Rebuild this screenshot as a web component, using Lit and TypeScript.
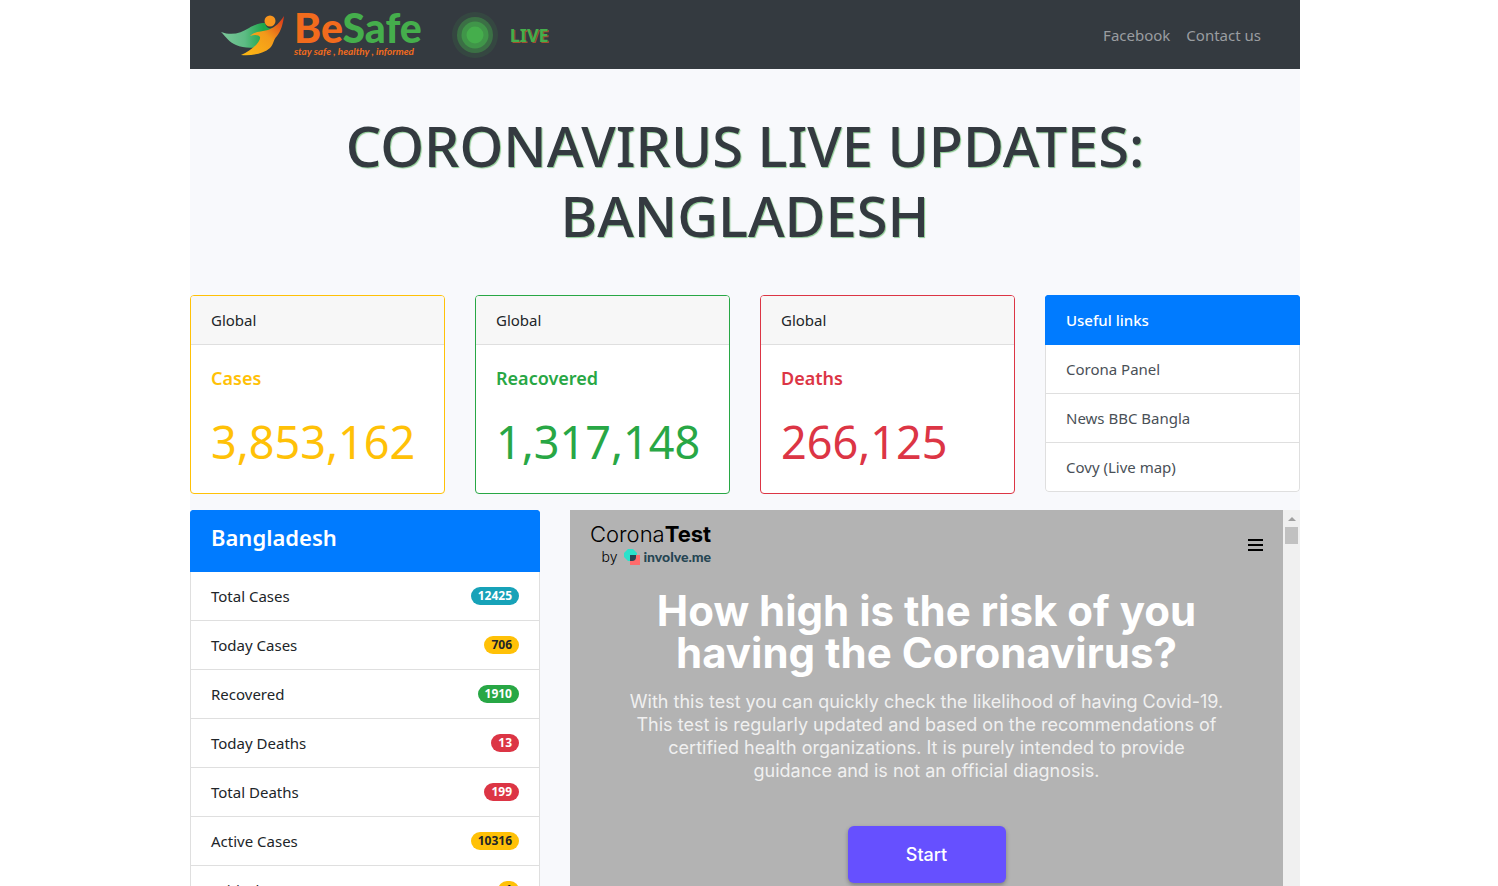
import { LitElement, html, css } from "lit";
import { customElement } from "lit/decorators.js";
import { classMap } from "lit/directives/class-map.js";

const totals = [
  { label: "Cases", value: "3,853,162", tone: "warning" },
  { label: "Reacovered", value: "1,317,148", tone: "success" },
  { label: "Deaths", value: "266,125", tone: "danger" },
];

const links = ["Corona Panel", "News BBC Bangla", "Covy (Live map)"];

const country = [
  { label: "Total Cases", value: "12425", tone: "info" },
  { label: "Today Cases", value: "706", tone: "warning" },
  { label: "Recovered", value: "1910", tone: "success" },
  { label: "Today Deaths", value: "13", tone: "danger" },
  { label: "Total Deaths", value: "199", tone: "danger" },
  { label: "Active Cases", value: "10316", tone: "warning" },
  { label: "Critical", value: "1", tone: "warning" },
];

@customElement("corona-test")
export class CoronaTest extends LitElement {
  static styles = css`
    :host {
      display: flex;
      background: #b3b3b3;
      font-family: Inter, "Liberation Sans", sans-serif;
      color: #fff;
    }
    .page {
      flex: 1;
      padding: 12px 20px;
    }
    .top {
      display: flex;
      justify-content: space-between;
      align-items: center;
      color: #000;
    }
    .brand {
      display: flex;
      flex-direction: column;
      align-items: flex-end;
    }
    .name {
      font-size: 22px;
      line-height: 25px;
      font-weight: 300;
    }
    .name b {
      font-weight: 700;
    }
    .by {
      display: flex;
      align-items: center;
      gap: 7px;
      font-size: 14px;
      line-height: 20px;
      font-weight: 300;
    }
    .maker {
      display: flex;
      align-items: center;
      gap: 2px;
      font: 900 14px/20px Lato, sans-serif;
      color: #264653;
    }
    .menu {
      border: 0;
      padding: 0;
      background: none;
      display: flex;
    }
    .intro {
      text-align: center;
      padding-top: 23px;
      margin: 0 auto;
      max-width: 598px;
    }
    h2 {
      margin: 0;
      font-size: 42px;
      line-height: 42px;
      font-weight: 700;
    }
    p {
      margin: 16px 0 44px;
      font-size: 18px;
      line-height: 23px;
      color: #f0f0f0;
    }
    .start {
      border: 0;
      border-radius: 6px;
      width: 158px;
      height: 57px;
      background: #6650ff;
      color: #fff;
      font: 500 18px/23px Inter, sans-serif;
      box-shadow: 0 2px 4px rgba(0, 0, 0, 0.3);
    }
    .track {
      width: 17px;
      background: #f0f0f0;
      display: flex;
      flex-direction: column;
      align-items: center;
    }
    .thumb {
      width: 13px;
      height: 17px;
      background: #c1c1c1;
    }
  `;

  render() {
    return html`
      <div class="page">
        <div class="top">
          <div class="brand">
            <div class="name">Corona<b>Test</b></div>
            <div class="by">
              by
              <span class="maker">
                <svg width="17" height="17" viewBox="0 0 17 17" aria-hidden="true">
                  <path d="M4 0h5l4 4v4l-4 4H4L0 8V4z" fill="#2ae2cb" />
                  <path d="M6 6h10v10H6z" fill="#ff6b6b" />
                  <path d="M6 6h6v2a4 4 0 0 1-4 4H6z" fill="#264653" />
                </svg>
                involve.me
              </span>
            </div>
          </div>
          <button class="menu" aria-label="Menu">
            <svg width="15" height="12" viewBox="0 0 15 12" aria-hidden="true">
              <path d="M0 0h15v2H0zM0 5h15v2H0zM0 10h15v2H0z" />
            </svg>
          </button>
        </div>
        <div class="intro">
          <h2>How high is the risk of you having the Coronavirus?</h2>
          <p>
            With this test you can quickly check the likelihood of having Covid-19. This test is
            regularly updated and based on the recommendations of certified health organizations.
            It is purely intended to provide guidance and is not an official diagnosis.
          </p>
          <button class="start">Start</button>
        </div>
      </div>
      <div class="track" aria-hidden="true">
        <svg width="17" height="17" viewBox="0 0 17 17"><path d="M5 11h8L9 7z" fill="#a0a0a0" /></svg>
        <div class="thumb"></div>
      </div>
    `;
  }
}

@customElement("app-root")
export class AppRoot extends LitElement {
  static styles = css`
    :host {
      display: block;
      max-height: 100vh;
      overflow: hidden;
      padding-right: 8px;
      background: #fff;
      color: #212529;
      font: 15px/24px "Noto Sans", "Open Sans", sans-serif;
    }
    * {
      box-sizing: border-box;
    }
    .container {
      max-width: 1110px;
      margin: 0 auto;
      background: #f8f9fc;
    }
    nav {
      display: flex;
      align-items: center;
      height: 69px;
      padding: 0 39px 0 30px;
      background: #343a40;
    }
    .logo {
      display: flex;
      gap: 8px;
      align-items: center;
      text-decoration: none;
      color: #f26b1d;
    }
    .word {
      display: flex;
      flex-direction: column;
      padding-bottom: 4px;
    }
    .title {
      font: 900 41px/36px Lato, sans-serif;
    }
    .title span {
      color: #45ae4c;
    }
    .tag {
      font: italic 700 10px/10px Lato, sans-serif;
    }
    .live {
      display: flex;
      align-items: center;
      gap: 10px;
      margin-left: 28px;
      font-size: 18px;
      line-height: 20px;
      font-weight: 700;
      color: #45ae4c;
      text-shadow: 1px 1px 0 #a5502f;
    }
    .live svg {
      display: block;
    }
    .menu {
      display: flex;
      gap: 16px;
      margin-left: auto;
    }
    .menu a {
      color: #9a9da0;
      text-decoration: none;
    }
    h1 {
      margin: 0;
      padding: 41px 15px 45px;
      text-align: center;
      font-size: 56px;
      line-height: 70px;
      font-weight: 500;
      color: #343a40;
      text-shadow: 1px 1px 1px rgba(69, 174, 76, 0.6);
    }
    .totals {
      display: grid;
      grid-template-columns: repeat(4, 1fr);
      gap: 30px;
      align-items: start;
      margin-bottom: 16px;
    }
    .card {
      border: 1px solid;
      border-radius: 4px;
      background: #fff;
      overflow: hidden;
    }
    .card header {
      padding: 12px 20px;
      background: #f7f7f7;
      border-bottom: 1px solid #dfdfdf;
      color: #212529;
    }
    .body {
      padding: 20px 20px 16px;
    }
    h5 {
      margin: 0 0 16px;
      font-size: 18px;
      line-height: 26px;
      font-weight: 600;
    }
    .number {
      font-size: 45px;
      line-height: 70px;
    }
    .card.warning {
      color: #ffc107;
    }
    .card.success {
      color: #28a745;
    }
    .card.danger {
      color: #dc3545;
    }
    .list {
      list-style: none;
      margin: 0;
      padding: 0;
      border-radius: 4px;
      overflow: hidden;
      background: #fff;
    }
    .list li {
      display: flex;
      justify-content: space-between;
      align-items: center;
      padding: 12px 20px;
      border: 1px solid #dfdfdf;
      border-top: 0;
    }
    .list li:last-child {
      border-radius: 0 0 4px 4px;
    }
    .list .head {
      border: 1px solid #007bff;
      background: #007bff;
      color: #fff;
      font-weight: 500;
    }
    .list a {
      color: #495057;
      text-decoration: none;
    }
    .lower {
      display: grid;
      grid-template-columns: 350fr 730fr;
      gap: 30px;
    }
    h4 {
      margin: 0 0 8px;
      font-size: 22px;
      line-height: 28px;
      font-weight: 600;
    }
    .badge {
      padding: 0 7px;
      border-radius: 9px;
      font-size: 12px;
      line-height: 18px;
      font-weight: 700;
      color: #fff;
    }
    .badge.info {
      background: #17a2b8;
    }
    .badge.warning {
      background: #ffc107;
      color: #212529;
    }
    .badge.success {
      background: #28a745;
    }
    .badge.danger {
      background: #dc3545;
    }
  `;

  render() {
    return html`
      <div class="container">
        <nav>
          <a class="logo" href="#">
            <svg width="66" height="44" viewBox="0 0 66 44" aria-hidden="true">
              <defs>
                <linearGradient id="wing">
                  <stop offset="0" stop-color="#7cc79a" />
                  <stop offset="0.45" stop-color="#5dbb84" />
                  <stop offset="0.8" stop-color="#1da64a" />
                </linearGradient>
                <linearGradient id="figure" x1="0" y1="1" x2="1" y2="0">
                  <stop offset="0" stop-color="#fdb913" />
                  <stop offset="0.55" stop-color="#f39a1a" />
                  <stop offset="1" stop-color="#d9301a" />
                </linearGradient>
              </defs>
              <path
                d="M1 19C12 23 21 20 29 15C36 11 40 10 45 10C46 15 50 17 54 14L40 33C33 36 23 35 16 32C9 29 6 24 1 19Z"
                fill="url(#wing)"
              />
              <path
                d="M64 3C60 9 56 14 48 17C41 19 35 18 30 23C35 21 39 22 40 24C41 29 31 38 21 42C31 43 43 41 50 35C54 31 53 27 57 23C61 18 63 11 64 3Z"
                fill="url(#figure)"
              />
              <circle cx="50" cy="8" r="5.5" fill="#f7941d" />
            </svg>
            <span class="word">
              <span class="title">Be<span>Safe</span></span>
              <span class="tag">stay safe , healthy , informed</span>
            </span>
          </a>
          <div class="live">
            <svg width="50" height="50" viewBox="0 0 50 50" fill="#45ae4c" aria-hidden="true">
              <circle cx="25" cy="25" r="23" opacity="0.12" />
              <circle cx="25" cy="25" r="18" opacity="0.4" />
              <circle cx="25" cy="25" r="13.5" opacity="0.6" />
              <circle cx="25" cy="25" r="8.5" />
            </svg>
            LIVE
          </div>
          <div class="menu"><a href="#">Facebook</a><a href="#">Contact us</a></div>
        </nav>
        <h1>CORONAVIRUS LIVE UPDATES:<br />BANGLADESH</h1>
        <section class="totals">
          ${totals.map(
            (t) => html`
              <article class=${classMap({ card: true, [t.tone]: true })}>
                <header>Global</header>
                <div class="body">
                  <h5>${t.label}</h5>
                  <div class="number">${t.value}</div>
                </div>
              </article>
            `
          )}
          <ul class="list">
            <li class="head">Useful links</li>
            ${links.map((l) => html`<li><a href="#">${l}</a></li>`)}
          </ul>
        </section>
        <section class="lower">
          <ul class="list">
            <li class="head"><h4>Bangladesh</h4></li>
            ${country.map(
              (c) => html`
                <li>
                  ${c.label}
                  <span class=${classMap({ badge: true, [c.tone]: true })}>${c.value}</span>
                </li>
              `
            )}
          </ul>
          <corona-test></corona-test>
        </section>
      </div>
    `;
  }
}
